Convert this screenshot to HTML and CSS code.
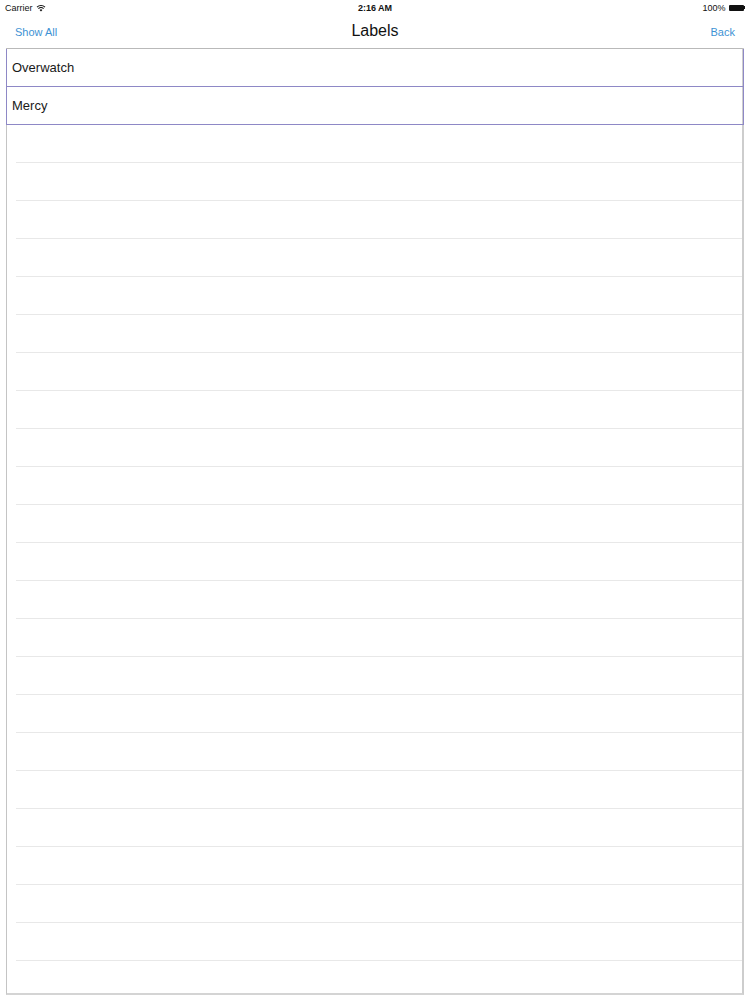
FILE: index.html
```html
<!DOCTYPE html>
<html>
<head>
<meta charset="utf-8">
<link rel="stylesheet" href="styles.css">
</head>
<body>
<div class="status">
  <div class="status-left">Carrier
    <svg class="wifi" width="10" height="8" viewBox="0 0 10 8"><path d="M5 7.6 L3.6 6 A2 2 0 0 1 6.4 6 Z" fill="#111"/><path d="M2.4 4.7 A3.8 3.8 0 0 1 7.6 4.7" stroke="#111" stroke-width="1.1" fill="none"/><path d="M1 3.1 A5.8 5.8 0 0 1 9 3.1" stroke="#111" stroke-width="1.1" fill="none"/></svg>
  </div>
  <div class="status-time">2:16 AM</div>
  <div class="status-right">100%
    <span class="battery"><span class="battery-body"></span><span class="battery-nub"></span></span>
  </div>
</div>
<div class="nav">
  <span class="nav-btn">Show All</span>
  <span class="nav-title">Labels</span>
  <span class="nav-btn">Back</span>
</div>
<div class="table">
  <div class="cell">Overwatch</div>
  <div class="cell">Mercy</div>
  <div class="empty"></div><div class="empty"></div><div class="empty"></div><div class="empty"></div>
  <div class="empty"></div><div class="empty"></div><div class="empty"></div><div class="empty"></div>
  <div class="empty"></div><div class="empty"></div><div class="empty"></div><div class="empty"></div>
  <div class="empty"></div><div class="empty"></div><div class="empty"></div><div class="empty"></div>
  <div class="empty"></div><div class="empty"></div><div class="empty"></div><div class="empty"></div>
  <div class="empty"></div><div class="empty"></div>
  <div class="empty-last"></div>
</div>
</body>
</html>
```
FILE: styles.css
```css
html, body {
  margin: 0;
  padding: 0;
  background: #fff;
  font-family: "Liberation Sans", Arial, sans-serif;
  color: #111;
}
.status {
  height: 15px;
  display: grid;
  grid-template-columns: 1fr auto 1fr;
  align-items: center;
  font-size: 9px;
  padding: 0 5px;
}
.status-left {
  display: flex;
  align-items: center;
  gap: 3px;
}
.wifi { display: block; }
.status-time {
  font-weight: bold;
  text-align: center;
}
.status-right {
  display: flex;
  justify-content: flex-end;
  align-items: center;
  gap: 3px;
}
.battery {
  display: flex;
  align-items: center;
}
.battery-body {
  width: 15px;
  height: 6px;
  background: #111;
  border-radius: 1px;
}
.battery-nub {
  width: 1.5px;
  height: 3px;
  background: #111;
}
.nav {
  height: 33px;
  display: flex;
  justify-content: space-between;
  align-items: center;
  padding: 0 15px;
  position: relative;
}
.nav-btn {
  font-size: 11px;
  color: #3d92d4;
  margin-top: 1px;
}
.nav-title {
  font-size: 16px;
  color: #111;
  position: absolute;
  left: 0;
  right: 0;
  text-align: center;
  pointer-events: none;
  margin-top: -1px;
}
.table {
  margin: 0 6px;
  height: 944px;
  border-top: 1px solid #b9b9b9;
  border-left: 1px solid #c4c4c4;
  border-right: 2px solid #cdcdcd;
  border-bottom: 2px solid #d4d4d4;
  display: flex;
  flex-direction: column;
}
.cell {
  height: 38px;
  box-sizing: border-box;
  border-left: 1px solid #8e88c6;
  border-right: 1px solid #8e88c6;
  border-bottom: 1px solid #8e88c6;
  margin-left: -1px;
  margin-right: -2px;
  display: flex;
  align-items: center;
  padding-left: 5px;
  padding-bottom: 1px;
  font-size: 13px;
  color: #1a1a1a;
}
.empty {
  height: 38px;
  flex: none;
  box-sizing: border-box;
  margin-left: 9px;
  border-bottom: 1px solid #e8e8e8;
}
.empty-last {
  flex: 1;
}
```
